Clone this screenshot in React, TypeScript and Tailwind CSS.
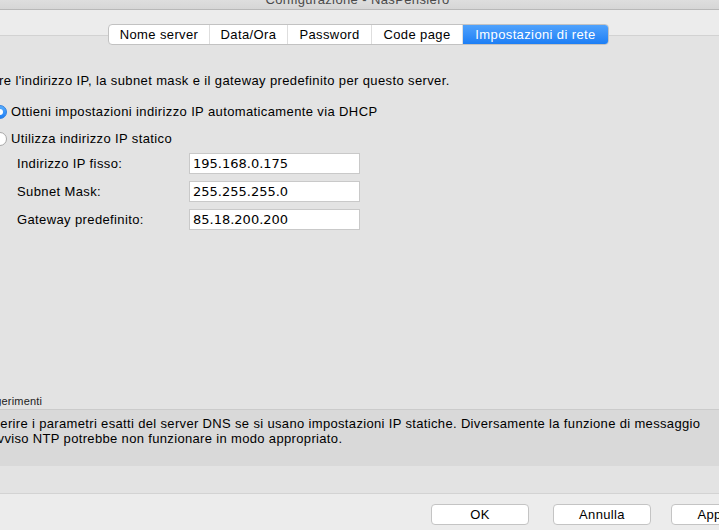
const tabs = ["Nome server", "Data/Ora", "Password", "Code page", "Impostazioni di rete"];
const tabWidths = ["w-[101px]", "w-[78px]", "w-[84px]", "w-[91px]", "w-[145px]"];

const fields = [
  { label: "Indirizzo IP fisso:", value: "195.168.0.175" },
  { label: "Subnet Mask:", value: "255.255.255.0" },
  { label: "Gateway predefinito:", value: "85.18.200.200" },
];

function Radio({ checked }: { checked: boolean }) {
  if (checked) {
    return (
      <span className="flex h-[14px] w-[14px] shrink-0 items-center justify-center rounded-full border border-[#2f7fe0] bg-gradient-to-b from-[#5aaefc] to-[#1a7ef5]">
        <span className="h-[6px] w-[6px] rounded-full bg-white" />
      </span>
    );
  }
  return <span className="h-[14px] w-[14px] shrink-0 rounded-full border border-[#a8a8a8] bg-white" />;
}

function Button({ label, className }: { label: string; className?: string }) {
  return (
    <button
      className={`h-[21px] w-[98px] shrink-0 rounded-[4px] border border-[#c4c4c4] bg-white text-[13px] leading-[19px] tracking-[0.35px] text-black ${className ?? ""}`}
    >
      {label}
    </button>
  );
}

export default function App() {
  return (
    <div className="flex h-[530px] w-[719px] flex-col overflow-hidden bg-[#e3e3e3] font-['Liberation_Sans',Arial,sans-serif] text-[13px] tracking-[0.38px] text-black">
      {/* title bar */}
      <div className="h-[10px] shrink-0 overflow-hidden border-b border-[#b8b8b8] bg-gradient-to-b from-[#dedede] to-[#d6d6d6]">
        <div className="-mt-[8px] pr-[4px] text-center text-[13px] leading-[16px] text-[#4a4a4a]">
          Configurazione - NasPensiero
        </div>
      </div>

      {/* tab strip */}
      <div className="h-[26px] shrink-0 border-b border-[#d2d2d2] bg-[#ececec]" />
      <div className="-mt-[12px] flex shrink-0 pl-[108px]">
        <div className="flex h-[21px] overflow-hidden rounded-[4px] border border-[#c2c2c2] bg-white">
          {tabs.map((tab, i) => {
            const active = i === tabs.length - 1;
            return (
              <div
                key={tab}
                className={`${tabWidths[i]} flex items-center justify-center whitespace-nowrap leading-[19px] ${
                  active
                    ? "bg-gradient-to-b from-[#4fa2fc] to-[#1b7ef5] text-white"
                    : "border-r border-[#dedede] text-black"
                }`}
              >
                {tab}
              </div>
            );
          })}
        </div>
      </div>

      {/* content */}
      <div className="mt-[28px] shrink-0 -ml-[35px] whitespace-nowrap leading-[16px]">
        Inserire l'indirizzo IP, la subnet mask e il gateway predefinito per questo server.
      </div>

      <div className="mt-[15px] flex shrink-0 items-center gap-[4px] -ml-[7px] leading-[16px]">
        <Radio checked />
        <span>Ottieni impostazioni indirizzo IP automaticamente via DHCP</span>
      </div>
      <div className="mt-[11px] flex shrink-0 items-center gap-[4px] -ml-[7px] leading-[16px]">
        <Radio checked={false} />
        <span>Utilizza indirizzo IP statico</span>
      </div>

      <div className="mt-[6px] flex shrink-0 flex-col gap-[7px] pl-[17px]">
        {fields.map((f) => (
          <div key={f.label} className="flex h-[21px] items-center">
            <span className="w-[172px] leading-[16px]">{f.label}</span>
            <div className="flex h-[21px] w-[171px] items-center border border-[#c9c9c9] bg-white pl-[3px] font-['DejaVu_Sans',Verdana,sans-serif] text-[13px] leading-[16px] tracking-normal">
              {f.value}
            </div>
          </div>
        ))}
      </div>

      <div className="flex-1" />

      {/* hints */}
      <div className="shrink-0 -ml-[25px] pb-[1px] text-[11px] leading-[14px] tracking-[0.2px] text-[#222]">Suggerimenti</div>
      <div className="h-[57px] shrink-0 border-t border-[#cbcbcb] bg-[#d9d9d9] pt-[6px] -ml-[18px] whitespace-nowrap leading-[15px] tracking-[0.34px]">
        <div>Inserire i parametri esatti del server DNS se si usano impostazioni IP statiche. Diversamente la funzione di messaggio</div>
        <div className="pl-[8px]">avviso NTP potrebbe non funzionare in modo appropriato.</div>
      </div>

      <div className="h-[27px] shrink-0" />

      {/* button bar */}
      <div className="flex h-[37px] shrink-0 border-t border-[#d3d3d3] bg-[#ececec] pl-[431px] pt-[10px]">
        <Button label="OK" />
        <Button label="Annulla" className="ml-[24px]" />
        <Button label="Applica" className="ml-[20px]" />
      </div>
    </div>
  );
}
